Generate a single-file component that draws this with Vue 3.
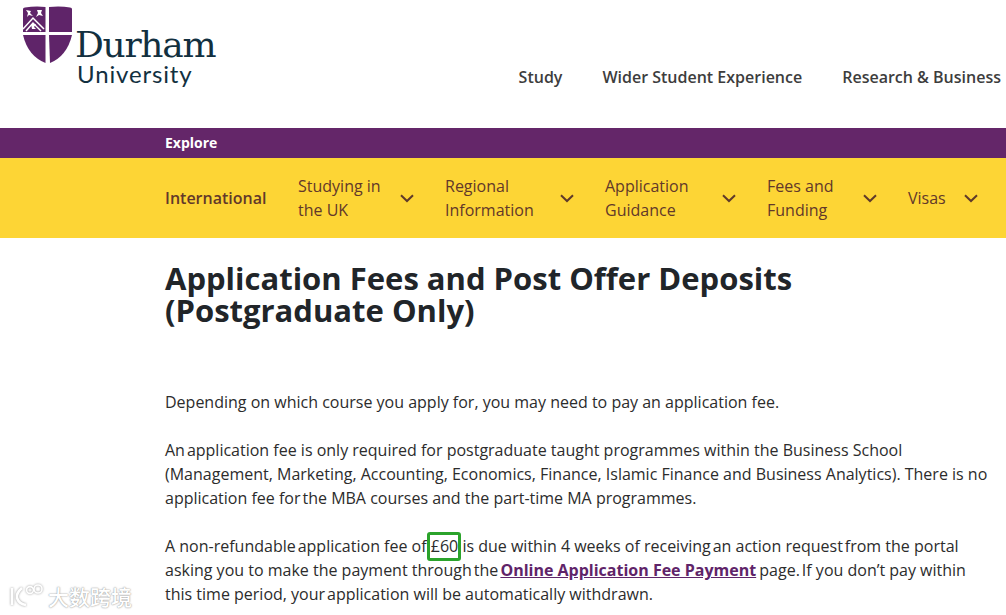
<script setup>
const topLinks = ['Study', 'Wider Student Experience', 'Research & Business']
const navItems = [
  { lines: ['Studying in', 'the UK'], w: 147 },
  { lines: ['Regional', 'Information'], w: 160 },
  { lines: ['Application', 'Guidance'], w: 162 },
  { lines: ['Fees and', 'Funding'], w: 141 },
  { lines: ['Visas'], w: 101 }
]
</script>

<template>
  <div class="page">
    <header class="top">
      <div class="logo">
        <svg class="shield" width="52" height="58" viewBox="0 0 52 58">
          <path fill="#5f2469" d="M1 3 Q1 1.5 3 1.5 Q13 0 23.5 1 V26 H1 Z" />
          <path fill="#5f2469" d="M27 1 Q39 0 48 1.5 Q50 1.5 50 3 V26 H27 Z" />
          <path fill="#5f2469" d="M1 29 H23.5 V57 Q6 50 1 29 Z" />
          <path fill="#5f2469" d="M27 29 H50 Q45 50 28 57 Z" />
          <path fill="none" stroke="#fff" stroke-width="1.5" d="M1 23 L11 12 L22 23 M4 25 L11 17 L19 25" />
          <g fill="#fff">
            <path d="M4 4 L9 5 L8 7 L11 10 L7 9 L5 11 L6 7 Z" />
            <path d="M15 4 L20 4 L19 7 L21 10 L17 9 L14 11 L16 7 Z" />
            <path d="M9 18 L14 18 L12 21 L14 23 L10 23 Z" />
          </g>
        </svg>
        <div class="wordmark">
          <div class="durham">Durham</div>
          <div class="university">University</div>
        </div>
      </div>
      <nav class="toplinks">
        <a v-for="l in topLinks" :key="l">{{ l }}</a>
      </nav>
    </header>

    <div class="explore"><span>Explore</span></div>

    <nav class="subnav">
      <strong class="intl">International</strong>
      <div v-for="item in navItems" :key="item.lines[0]" class="navitem" :style="{ width: item.w + 'px' }">
        <span class="navlabel"><span v-for="t in item.lines" :key="t">{{ t }}</span></span>
        <svg class="chev" width="14" height="9" viewBox="0 0 14 9">
          <path d="M1 1.2 L7 7 L13 1.2" fill="none" stroke="#5f3a2a" stroke-width="2" />
        </svg>
      </div>
    </nav>

    <main class="content">
      <h1>Application Fees and Post Offer Deposits<br>(Postgraduate Only)</h1>
      <p>Depending on which course you apply for, you may need to pay an application fee.</p>
      <p><span class="tight">An application</span> fee is only required for postgraduate taught programmes within the Business School<br>(Management, Marketing, Accounting, Economics, Finance, Islamic Finance and Business Analytics). There is no<br>application fee <span class="tight">for the</span> MBA courses and the part-time MA programmes.</p>
      <p>A <span class="tight">non-refundable application</span> fee of <span class="fee">£60</span> is due within 4 weeks of <span class="tight">receiving an</span> action <span class="tight">request from</span> the portal<br>asking you to make the payment <span class="tight">through the</span> <a class="paylink">Online Application Fee Payment</a> <span class="tight">page. If</span> you don’t pay within<br>this time period, <span class="tight">your application</span> will be automatically withdrawn.</p>
    </main>

    <div class="watermark">
      <svg width="38" height="24" viewBox="0 0 38 24">
        <g fill="none" stroke="#fff" stroke-width="2.6">
          <path d="M4 4 V21" />
          <path d="M14 4 Q8 9 9 14 Q11 20 18 21" />
          <circle cx="22" cy="6" r="3.4" stroke-width="1.6" />
          <circle cx="30" cy="5" r="4" stroke-width="1.6" />
        </g>
      </svg>
      <span>大数跨境</span>
    </div>
  </div>
</template>

<style>
html, body { overflow: hidden; }
</style>

<style scoped>
.page {
  position: relative;
  width: 1006px;
  height: 615px;
  overflow: hidden;
  background: #fff;
  font-family: "Open Sans", "Liberation Sans", sans-serif;
  color: #212529;
}
.top {
  height: 128px;
  display: flex;
  justify-content: space-between;
  padding-left: 22px;
  box-sizing: border-box;
}
.logo {
  display: flex;
  padding-top: 6px;
}
.wordmark {
  margin: 21px 0 0 1px;
  color: #12303f;
}
.durham {
  font-family: "DejaVu Serif", serif;
  font-size: 36px;
  line-height: 35px;
  letter-spacing: -1.3px;
}
.university {
  font-family: "Lato", sans-serif;
  font-size: 24px;
  line-height: 24px;
  margin-left: 2px;
  letter-spacing: .85px;
}
.toplinks {
  display: flex;
  gap: 40px;
  padding-top: 65px;
  margin-right: 5px;
  font-size: 16px;
  font-weight: 600;
  line-height: 24px;
  color: #3d3d3d;
  white-space: nowrap;
}
.explore {
  height: 30px;
  background: #642669;
  color: #fff;
  font-size: 14px;
  font-weight: 700;
  line-height: 30px;
  padding-left: 165px;
}
.subnav {
  height: 80px;
  background: #fdd535;
  display: flex;
  align-items: center;
  padding-left: 165px;
  color: #62382a;
  font-size: 16px;
  line-height: 24px;
  white-space: nowrap;
}
.intl {
  font-weight: 600;
  width: 133px;
  flex: none;
}
.navitem {
  display: flex;
  align-items: center;
  flex: none;
}
.navlabel {
  display: flex;
  flex-direction: column;
  flex: 1;
}
.chev {
  margin-right: 31px;
  flex: none;
}
.content {
  padding: 24px 0 0 165px;
}
h1 {
  margin: 0 0 64px;
  font-size: 31px;
  line-height: 32px;
  font-weight: 700;
  white-space: nowrap;
}
p {
  margin: 0 0 24px;
  font-size: 16px;
  line-height: 24px;
  white-space: nowrap;
  color: #2c2c2c;
}
.tight {
  word-spacing: -2.2px;
}
.fee {
  position: relative;
}
.fee::after {
  content: "";
  position: absolute;
  left: -4px;
  right: -3px;
  top: -3px;
  bottom: -4px;
  border: 3px solid #2ba32b;
  border-radius: 3px;
}
.paylink {
  margin: 0 -1px 0 -2px;
  color: #5f2469;
  font-weight: 700;
  text-decoration: underline;
}
.watermark {
  position: absolute;
  left: 8px;
  top: 584px;
  display: flex;
  align-items: center;
  gap: 2px;
  color: #fff;
  font-family: "Noto Sans CJK SC", sans-serif;
  font-size: 21px;
  line-height: 24px;
  font-weight: 500;
  text-shadow: 0 0 1px #999, 0 0 2px #aaa;
}
.watermark svg {
  filter: drop-shadow(0 0 1px #999);
}
</style>
